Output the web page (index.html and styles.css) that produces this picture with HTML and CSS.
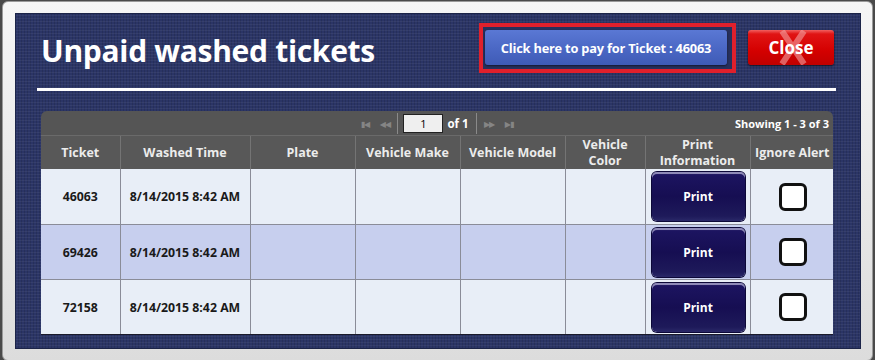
FILE: index.html
```html
<!DOCTYPE html>
<html lang="en">
<head>
    <meta charset="UTF-8">
    <title>Unpaid washed tickets</title>
    <link rel="stylesheet" href="styles.css">
</head>
<body>

    <div class="frame">
        <div class="panel">
            <div class="header">
                <h1>Unpaid washed tickets</h1>
                <div class="actions">
                    <div class="pay-box">
                        <button class="pay">Click here to pay for Ticket : 46063</button>
                    </div>
                    <button class="close">
                        <svg class="close-x" width="30" height="35" viewBox="0 0 30 35">
                            <path d="M4 1 L26 34 M26 1 L4 34" stroke="#f4a0a0" stroke-width="6" opacity="0.6"/>
                        </svg>
                        <span>Close</span>
                    </button>
                </div>
            </div>

            <div class="rule"></div>

            <div class="grid">
                <div class="pager">
                    <div class="pager-nav">
                        <span class="arrow">&#9646;&#9664;</span>
                        <span class="arrow">&#9664;&#9664;</span>
                        <span class="sep"></span>
                        <input class="page" type="text" value="1">
                        <span class="of">of 1</span>
                        <span class="sep"></span>
                        <span class="arrow">&#9654;&#9654;</span>
                        <span class="arrow">&#9654;&#9646;</span>
                    </div>
                    <span class="showing">Showing 1 - 3 of 3</span>
                </div>
                <table>
                    <colgroup>
                        <col style="width:79px">
                        <col style="width:130px">
                        <col style="width:105px">
                        <col style="width:105px">
                        <col style="width:105px">
                        <col style="width:80px">
                        <col style="width:105px">
                        <col style="width:84px">
                    </colgroup>
                    <thead>
                        <tr>
                            <th>Ticket</th>
                            <th>Washed Time</th>
                            <th>Plate</th>
                            <th>Vehicle Make</th>
                            <th>Vehicle Model</th>
                            <th>Vehicle<br>Color</th>
                            <th>Print<br>Information</th>
                            <th>Ignore Alert</th>
                        </tr>
                    </thead>
                    <tbody>
                        <tr>
                            <td>46063</td>
                            <td>8/14/2015 8:42 AM</td>
                            <td></td><td></td><td></td><td></td>
                            <td><button class="print">Print</button></td>
                            <td><span class="check"></span></td>
                        </tr>
                        <tr class="alt">
                            <td>69426</td>
                            <td>8/14/2015 8:42 AM</td>
                            <td></td><td></td><td></td><td></td>
                            <td><button class="print">Print</button></td>
                            <td><span class="check"></span></td>
                        </tr>
                        <tr>
                            <td>72158</td>
                            <td>8/14/2015 8:42 AM</td>
                            <td></td><td></td><td></td><td></td>
                            <td><button class="print">Print</button></td>
                            <td><span class="check"></span></td>
                        </tr>
                    </tbody>
                </table>
            </div>
        </div>
    </div>

</body>
</html>
```

FILE: styles.css
```css
body {
    margin: 0;
    background-color: #4a4a4a;
    font-family: "Open Sans", "DejaVu Sans", sans-serif;
    width: 875px;
    height: 360px;
    overflow: hidden;
}
.frame {
    margin: 1px 2px 0 2px;
    height: 347px;
    padding: 11px 11px 0 12px;
    background: linear-gradient(#f6f6f6, #dcdcdc);
    border: 1px solid #9a9a9a;
    border-radius: 6px;
}
.panel {
    height: 336px;
    box-sizing: border-box;
    padding: 10px 25px 14px 22px;
    background-color: #2b3566;
    background-image:
        repeating-linear-gradient(0deg, rgba(255,255,255,0.05) 0 1px, transparent 1px 3px),
        repeating-linear-gradient(90deg, rgba(0,0,0,0.12) 0 1px, transparent 1px 3px);
    box-shadow: inset 0 0 0 1px #1c2448;
}
.header {
    display: flex;
    align-items: center;
    justify-content: space-between;
    height: 50px;
    padding-left: 4px;
}
h1 {
    margin: 0;
    color: white;
    font-size: 30px;
    font-weight: bold;
    letter-spacing: -0.3px;
    position: relative;
    top: 2px;
}
.actions {
    display: flex;
    align-items: center;
    gap: 12px;
    margin-right: 2px;
}
.pay-box {
    border: 4px solid #e0202c;
    padding: 3px 5px 4px 2px;
    background: #27305c;
}
.pay {
    display: block;
    width: 242px;
    height: 35px;
    border: none;
    border-radius: 3px;
    background: linear-gradient(#5a78d4, #4a67c4 55%, #3f5bb6);
    box-shadow: 0 1px 2px rgba(0,0,0,0.5);
    color: white;
    font-family: inherit;
    font-weight: bold;
    font-size: 12.8px;
    letter-spacing: -0.2px;
}
.close {
    position: relative;
    width: 86px;
    height: 35px;
    margin-top: -2px;
    border: none;
    border-radius: 3px;
    background: linear-gradient(#f26060 0, #e01414 4px, #d40000 60%, #c00000);
    box-shadow: 0 1px 2px rgba(0,0,0,0.6);
    color: white;
    font-family: inherit;
    font-weight: bold;
    font-size: 17px;
    padding: 0;
}
.close-x {
    position: absolute;
    left: 30px;
    top: 0;
}
.close span {
    position: relative;
}
.rule {
    height: 3px;
    margin-top: 15px;
    background: white;
}
.grid {
    margin: 20px 3px 0 4px;
    border-radius: 6px 6px 0 0;
    overflow: hidden;
    box-shadow: 0 1px 0 #1a1a2a;
}
.pager {
    position: relative;
    height: 25px;
    background: #555555;
    border-bottom: 1px solid #6a6a6a;
    box-sizing: border-box;
    display: flex;
    align-items: center;
    justify-content: center;
    color: white;
    font-size: 11.5px;
    font-weight: bold;
}
.pager-nav {
    display: flex;
    align-items: center;
    gap: 5px;
}
.arrow {
    color: #858585;
    font-size: 8px;
    letter-spacing: -1px;
    width: 15px;
    text-align: center;
}
.sep {
    width: 1px;
    height: 21px;
    background: #8a8a8a;
}
.page {
    width: 40px;
    height: 19px;
    box-sizing: border-box;
    border: 1px solid #222;
    background: #efefef;
    text-align: center;
    font-family: inherit;
    font-size: 11px;
    padding: 0;
    margin-right: -1px;
}
.of {
    margin-right: 2px;
}
.showing {
    position: absolute;
    right: 4px;
    top: 5px;
    font-size: 11px;
}
table {
    width: 793px;
    border-collapse: collapse;
    table-layout: fixed;
}
th {
    height: 33px;
    padding: 0;
    background: #585858;
    color: #ececec;
    font-size: 12.5px;
    font-weight: bold;
    line-height: 16px;
    border-left: 1px solid #747474;
}
td {
    height: 54px;
    padding: 0;
    background: #e8eef7;
    color: #1a1a1a;
    font-size: 12.3px;
    font-weight: bold;
    text-align: center;
    border-left: 1px solid #8a8c98;
    border-top: 1px solid #8a8c98;
}
th:first-child, td:first-child {
    border-left: none;
}
tbody tr:first-child td {
    border-top: none;
    height: 55px;
}
tr.alt td {
    background: #c7cfee;
}
.print {
    display: block;
    width: 93px;
    height: 49px;
    margin: 0 0 0 6px;
    border: none;
    border-radius: 5px;
    background: linear-gradient(#3a3274 0, #1c1460 3px, #160e52 50%, #1e1a5a 90%, #2a2868);
    box-shadow: 0 0 0 1px #0c0838, inset 0 2px 0 #8e8ab8;
    color: white;
    font-family: inherit;
    font-weight: bold;
    font-size: 12px;
}
.check {
    display: inline-block;
    width: 28px;
    height: 28px;
    box-sizing: border-box;
    border: 3px solid #111;
    border-radius: 6px;
    background: white;
    vertical-align: middle;
    margin-left: 2px;
}
```
